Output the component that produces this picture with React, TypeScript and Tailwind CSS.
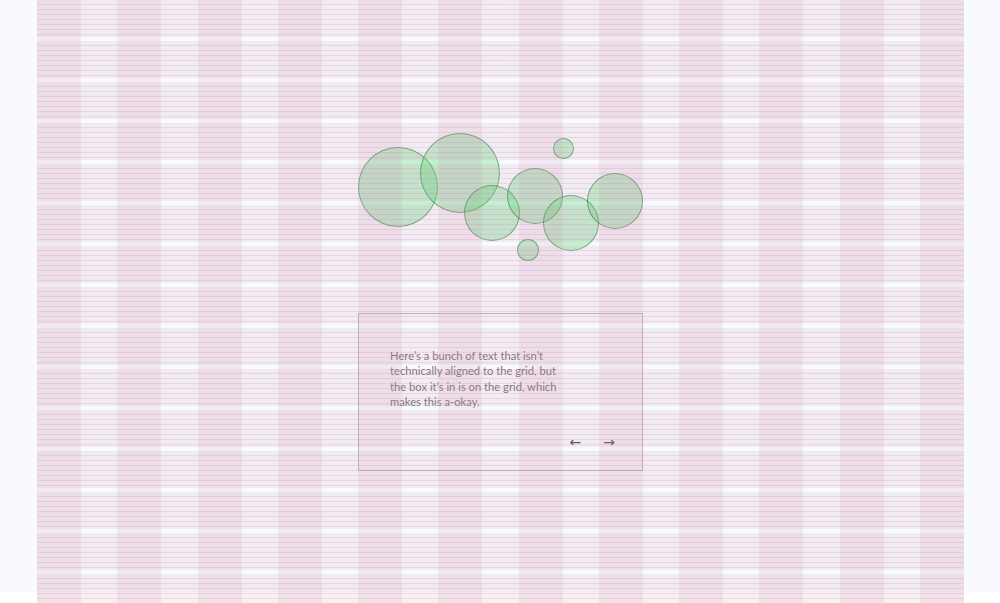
import React from "react";

const columns = Array.from({ length: 12 }, (_, i) => i);
const rows = Array.from({ length: 15 }, (_, i) => i);

// circles, placed relative to the left edge of column 5
const bubbles = [
  { left: 0, top: 147, size: 80 },
  { left: 62, top: 133, size: 80 },
  { left: 106, top: 185, size: 56 },
  { left: 149, top: 168, size: 56 },
  { left: 185, top: 195, size: 56 },
  { left: 229, top: 173, size: 56 },
  { left: 195, top: 138, size: 21 },
  { left: 159, top: 239, size: 22 },
];

function GridOverlay() {
  return (
    <div className="pointer-events-none absolute inset-0">
      {/* columns */}
      <div className="absolute inset-y-0 left-[37px] grid w-[927px] grid-cols-12 gap-x-[36.27px]">
        {columns.map((c) => (
          <div key={c} className="h-full bg-[rgba(190,130,155,0.13)]" />
        ))}
      </div>
      {/* baseline rows */}
      <div className="absolute left-[37px] right-[36px] top-0 flex flex-col gap-[4px]">
        {rows.map((r) => (
          <div
            key={r}
            className="h-[37px] shrink-0 bg-[rgba(190,130,155,0.11)]"
          >
            <div className="h-full w-full bg-[repeating-linear-gradient(to_bottom,transparent_0px,transparent_4px,rgba(215,120,155,0.2)_4px,rgba(215,120,155,0.2)_5px)]" />
          </div>
        ))}
      </div>
    </div>
  );
}

function Bubbles() {
  return (
    <div className="relative col-span-4 col-start-5 h-[313px]">
      {bubbles.map((b, i) => (
        <div
          key={i}
          className="absolute rounded-full border border-[rgba(20,110,40,0.5)] bg-[rgba(90,215,115,0.32)]"
          style={{ left: b.left, top: b.top, width: b.size, height: b.size }}
        />
      ))}
    </div>
  );
}

function Card() {
  return (
    <div className="col-span-4 col-start-5 flex h-[158px] flex-col justify-between border border-[rgba(125,110,118,0.45)] pb-[21px] pl-[31px] pr-[27px] pt-[34px]">
      <p className="w-[172px] text-[11.2px] leading-[15.3px] text-[#7f787c] [font-family:Lato,'Noto_Sans',sans-serif]">
        Here’s a bunch of text that isn’t technically aligned to the grid, but
        the box it’s in is on the grid, which makes this a-okay.
      </p>
      <div className="flex justify-end gap-[22px] text-[14px] leading-none text-[#555] [font-family:'DejaVu_Sans',sans-serif]">
        <button type="button">←</button>
        <button type="button">→</button>
      </div>
    </div>
  );
}

export default function App() {
  return (
    <div className="relative h-[603px] w-full overflow-hidden bg-white">
      <div className="h-[592px] bg-[#f8faff]">
        <div className="ml-[37px] grid w-[927px] grid-cols-12 gap-x-[36.27px]">
          <Bubbles />
          <Card />
        </div>
      </div>
      <GridOverlay />
    </div>
  );
}
